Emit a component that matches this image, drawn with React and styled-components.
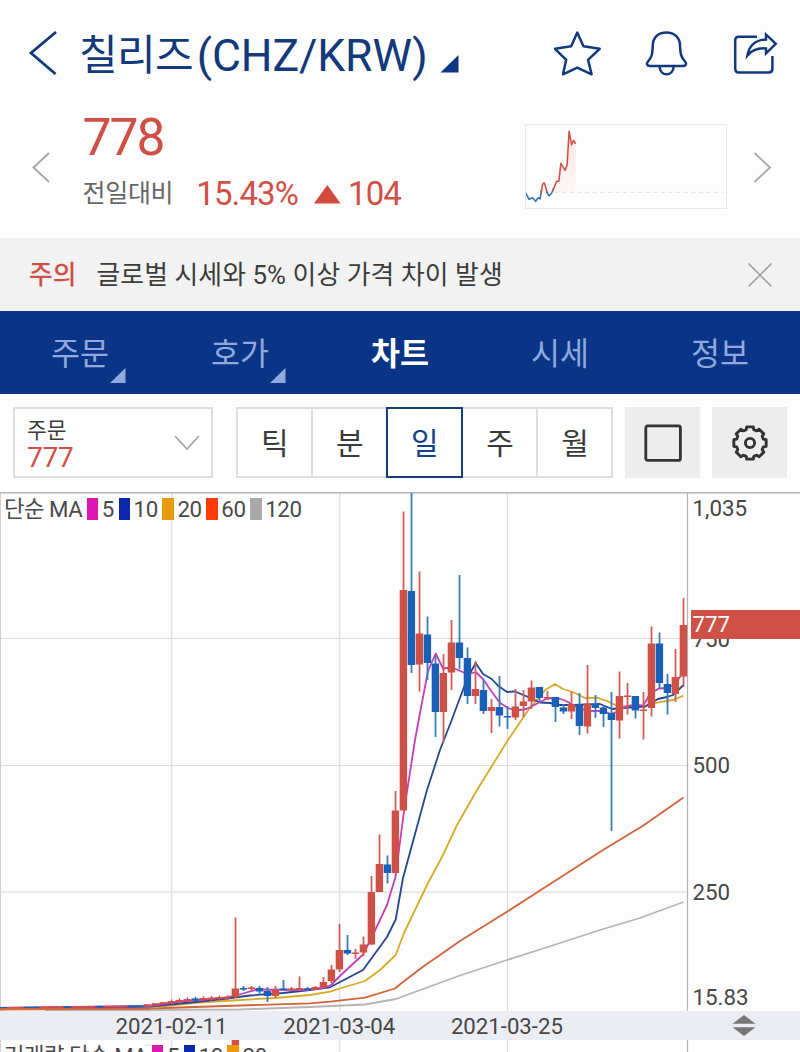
import React from "react";
import styled, { createGlobalStyle } from "styled-components";

const NAVY = "#12397a";
const RED = "#cf5046";
const BLUE = "#1a5fb8";

const GlobalStyle = createGlobalStyle`
  *, *::before, *::after { box-sizing: border-box; }
  html, body { margin: 0; padding: 0; background: #fdfdfd; }
  body { font-family: Roboto, "Noto Sans CJK KR", sans-serif; color: #3c3c3c; overflow: hidden; }
  svg { display: block; flex: none; }
`;

const Screen = styled.div`
  width: 800px;
  height: 1052px;
  overflow: hidden;
  display: flex;
  flex-direction: column;
  background: #fdfdfd;
`;

const Text = styled.span`
  display: block;
  flex: none;
  white-space: nowrap;
  font-size: ${(p) => p.$size}px;
  line-height: ${(p) => p.$line || Math.round(p.$size * 1.2)}px;
  letter-spacing: ${(p) => p.$track || 0}px;
  font-weight: ${(p) => p.$weight || 400};
  color: ${(p) => p.$color || "inherit"};
`;

const Header = styled.header`
  height: 108px;
  flex: none;
  display: flex;
  align-items: center;
  padding: 0 18px 0 26px;
`;

const Title = styled.h1`
  display: flex;
  align-items: center;
  gap: 4px;
  margin: 0 0 0 21px;
  padding-top: 3px;
  width: 360.5px;
  flex: none;
  font-weight: 400;
  color: ${NAVY};
`;

const TitleCorner = styled.svg`
  margin-top: 19px;
`;

const HeaderActions = styled.div`
  display: flex;
  align-items: center;
  gap: 40px;
  margin-left: auto;
`;

const PriceSection = styled.section`
  height: 130px;
  flex: none;
  display: flex;
  align-items: flex-start;
  padding: 0 27px 0 31px;
`;

const ArrowSlot = styled.div`
  padding-top: 42px;
  flex: none;
`;

const PriceInfo = styled.div`
  margin-left: 32.5px;
  padding-top: 1px;
  width: 442.5px;
  flex: none;
`;

const ChangeRow = styled.div`
  display: flex;
  align-items: center;
  height: 36px;
  margin-top: 9px;
`;

const Percent = styled(Text)`
  margin-left: 23px;
`;

const UpTriangle = styled.svg`
  margin: 0 7px 0 16px;
`;

const Spark = styled.div`
  margin: 16px 26px 0 0;
  width: 202px;
  height: 85px;
  flex: none;
  border: 1.5px solid #e9e9e9;
`;

const Notice = styled.div`
  height: 73px;
  flex: none;
  display: flex;
  align-items: center;
  gap: 20px;
  padding: 0 27px 0 29px;
  background: #f2f2f2;
  svg { margin-left: auto; }
`;

const Tabs = styled.nav`
  height: 83px;
  flex: none;
  display: grid;
  grid-template-columns: repeat(5, 160px);
  background: #0a3586;
`;

const Tab = styled.div`
  position: relative;
  display: flex;
  justify-content: center;
  padding-top: 24px;
  color: ${(p) => (p.$active ? "#ffffff" : "#8fa9de")};
`;

const Corner = styled.svg`
  position: absolute;
  left: 110px;
  top: 57px;
`;

const Toolbar = styled.div`
  height: 98px;
  flex: none;
  display: flex;
  align-items: flex-start;
  padding: 13px 13px 0;
`;

const OrderSelect = styled.div`
  width: 200px;
  height: 71px;
  border: 2px solid #dedede;
  background: #fff;
  display: flex;
  align-items: center;
  justify-content: space-between;
  padding: 0 10px 0 12px;
`;

const OrderLabels = styled.div`
  display: flex;
  flex-direction: column;
  padding-top: 3px;
`;

const Periods = styled.div`
  display: flex;
  margin-left: 23px;
`;

const Period = styled.div`
  width: 77px;
  height: 71px;
  margin-right: -1.9px;
  padding: 3px 0 0 1px;
  display: flex;
  align-items: center;
  justify-content: center;
  position: relative;
  z-index: ${(p) => (p.$active ? 1 : 0)};
  border: 2px solid ${(p) => (p.$active ? "#153f78" : "#dedede")};
  background: #fff;
  color: ${(p) => (p.$active ? "#153f86" : "#3a3a3a")};
`;

const ToolButton = styled.div`
  width: 75px;
  height: 71px;
  margin-left: ${(p) => p.$gap}px;
  display: flex;
  align-items: center;
  justify-content: center;
  background: #ededed;
`;

const ChartPane = styled.section`
  position: relative;
  height: 519px;
  flex: none;
`;

const Legend = styled.div`
  position: absolute;
  left: ${(p) => p.$left}px;
  top: ${(p) => p.$top}px;
  display: flex;
  align-items: center;
  color: #4a4a4a;
`;

const Swatch = styled.i`
  width: 11.5px;
  height: 22px;
  flex: none;
  margin: 0 3.6px 0 4.5px;
  background: ${(p) => p.$color};
`;

const DateBar = styled.div`
  height: 29px;
  flex: none;
  display: flex;
  align-items: center;
  padding: 0 44px 0 115.5px;
  background: #ecedf3;
  color: #464646;
  svg { margin-left: auto; }
`;

const DateLabel = styled(Text)`
  width: 167.7px;
`;

const VolumePane = styled.section`
  position: relative;
  height: 12px;
  flex: none;
  overflow: hidden;
`;

/* [x, high, low, body top, body bottom, rising] in pane pixels */
const CANDLES = [
  [235.5, 917.5, 998, 988.5, 997, 1], [243.5, 986, 991, 988, 989.5, 0],
  [251.5, 986, 990.5, 987.5, 989, 1], [259.5, 986, 995, 988, 991.5, 0],
  [267.5, 987, 1002, 991, 996, 0], [275.5, 986, 998, 990, 996, 1],
  [283.5, 980, 991, 988.5, 990, 0], [291.5, 987, 991, 988.5, 990, 1],
  [299.5, 976.5, 991, 988, 989.5, 1], [307.5, 987, 991, 988.5, 990, 0],
  [315.5, 986, 990, 987, 989.5, 1], [323.5, 977, 988, 982, 987, 1],
  [331.5, 965, 983, 969.5, 981, 1], [339.5, 924, 972, 950, 969.5, 1],
  [347.5, 935, 955, 950, 953.5, 0], [355.5, 949, 959, 952.5, 954, 1],
  [363.5, 936.5, 956, 944.5, 952.5, 1], [371.5, 876, 945, 892, 944.5, 1],
  [379.5, 834.5, 892, 864, 892, 1], [387.5, 855.5, 883.5, 864.5, 873, 0],
  [395.5, 791, 873, 810.5, 873, 1], [403.5, 511.5, 810, 590, 810.5, 1],
  [411.5, 493, 673, 591, 665, 0], [419.5, 571.5, 691.5, 633.5, 664.5, 1],
  [427.5, 616.5, 680, 634.5, 663, 0], [435.5, 656, 737, 663.5, 712, 0],
  [443.5, 654, 743, 673, 712, 1], [451.5, 620, 690, 642.5, 672.5, 1],
  [459.5, 575, 669, 642.5, 658, 0], [467.5, 647.5, 704, 658, 696, 0],
  [475.5, 661, 704, 689, 696, 1], [483.5, 679, 714, 690, 711, 0],
  [491.5, 699, 733, 707, 711, 1], [499.5, 676, 726.5, 707, 715.5, 0],
  [507.5, 706, 729, 716, 717.5, 0], [515.5, 689, 720, 706.5, 717.5, 1],
  [523.5, 690, 717, 701.5, 706, 1], [531.5, 680.5, 709, 687.5, 701.5, 1],
  [539.5, 687, 702, 687, 698, 0], [547.5, 691, 700, 697, 698.5, 1],
  [555.5, 697, 722, 697, 707, 0], [563.5, 704, 714, 707.5, 711.5, 0],
  [571.5, 692, 719, 704, 711.5, 1], [579.5, 693, 735, 705, 726, 0],
  [587.5, 665, 733.5, 703.5, 726.5, 1], [595.5, 695, 718, 704, 708, 0],
  [603.5, 705, 727, 707.5, 714, 0], [611.5, 692, 831, 713, 720, 0],
  [619.5, 671.5, 738.5, 696, 720.5, 1], [627.5, 683, 714.5, 695.5, 697, 1],
  [635.5, 696, 718.5, 696, 710.5, 0], [643.5, 692, 739.5, 709.5, 711, 1],
  [651.5, 626.5, 716.5, 643.5, 708, 1], [659.5, 632.5, 689, 643.5, 683, 0],
  [667.5, 674, 714.5, 684, 693, 0], [675.5, 649, 702, 677, 694, 1],
  [683.5, 598, 687, 625, 676.5, 1],
];

const FLAT_DAYS = Array.from({ length: 29 }, (_, i) => {
  const x = 3.5 + i * 8;
  const y = x < 140 ? 1007.8 - x * 0.012 : 1006 - Math.min(x - 140, 50) * 0.13 - Math.max(0, x - 190) * 0.05;
  return { x, y, up: ![0, 3, 4, 8, 12, 16, 17, 24].includes(i) };
});

const AVERAGES = [
  ["#b5b5b5", "45,1010.5 240,1009.5 310,1007 365,1004.5 396,999 423,989 460,975.5 507,960 540,949.5 600,930 640,918 683.5,902"],
  ["#d2643c", "0,1009.5 150,1008.5 240,1005.5 310,1003.3 330,1001.7 365,997.7 395,988.5 402,982.7 423,966.7 440,955 460,941 507,911.7 540,890.5 603,850 643,825.7 683.5,797.5"],
  ["#d6ab28", "0,1008.8 150,1007.5 200,1002.5 240,1000 275,998 310,995 330,991.6 343,987.5 365,981 380,970 395.7,955 404,933 427,885 443,855 457,825 477,790 508,740 528,710.5 545,690 555,684 563,689 573,692 585,698 597,697.7 607,701 617,705.7 630,706.7 645,706 657,702.7 673,700 683.5,695.7"],
  ["#27468f", "0,1008.3 150,1006.5 200,1001.5 227,998.5 250,995.5 283,993 310,990 330,987.3 363,970 387,937 395.7,919.5 403,878 427,790 440,750 451.7,720 467,679 475.7,663 483,674 491.7,679 498,685.7 507,692 515,691.5 528,697 540,702.5 550,703 560,705 573,705 600,704 612,709 630,707.5 645,706.5 658,699 667,697 673,695 683.5,685"],
  ["#c43fb4", "0,1008 150,1006 180,1001.5 227,997.5 243,993.5 257,989.5 300,990 323,988 331,985 341,975 363,954.5 371,939 387,905 395.5,877 404,811 415,740 420,713 428,671 435.7,653.5 443,668.5 451.5,667.5 458,670 468,674.5 475.5,672 483,679 491.5,691.5 500,703 508,708 516.5,710.5 526.5,709 540,702 547,698.5 557,698 565,700.5 575,706 587,711 603,711 611,714 619,711 627,706 635,705 643,705.5 651,693 659,688.5 667,688 675,684 683.5,672"],
];

function PriceChart() {
  return (
    <svg width="800" height="519" viewBox="0 492 800 519">
      <g stroke="#dedede" strokeWidth="1.2">
        <path d="M0 638.5H687M0 765.5H687M0 892.2H687M171.7 493V1011M339.7 493V1011M507.5 493V1011" />
      </g>
      <path d="M.5 493V1011" stroke="#cfcfcf" />
      <path d="M687.5 493V1011" stroke="#b3b3b3" strokeWidth="1.2" />
      <path d="M0 492.7H800" stroke="#b4b4b4" strokeWidth="1.8" />
      <g fill="none" strokeWidth="1.8" strokeLinejoin="round">
        {AVERAGES.map(([color, points]) => (
          <polyline key={color} points={points} stroke={color} />
        ))}
      </g>
      {FLAT_DAYS.map((d) => (
        <g key={d.x} fill={d.up ? RED : BLUE}>
          <rect x={d.x - 4} y={d.y - 0.8} width={d.x < 140 ? 8 : 7} height="1.8" />
          {d.x > 170 && <rect x={d.x - 0.7} y={d.y - 2.5} width="1.4" height="5" />}
        </g>
      ))}
      <path d="M0 1008.8H150" stroke="#d2643c" strokeWidth="1.4" />
      {CANDLES.map(([x, hi, lo, top, bottom, up]) => (
        <g key={x} fill={up ? RED : BLUE}>
          <rect x={x - 0.9} y={hi} width="1.8" height={lo - hi} fill={up ? "#cd6058" : "#3a7cb8"} />
          <rect x={x - 3.8} y={top} width="7.4" height={bottom - top} />
        </g>
      ))}
      <g fontFamily="Roboto, sans-serif" fontSize="22.3" fill="#464646">
        <text x="692.5" y="515.8">1,035</text>
        <text x="692.5" y="646.5">750</text>
        <text x="692.5" y="773.3">500</text>
        <text x="692.5" y="900">250</text>
        <text x="692.5" y="1004.5">15.83</text>
        <rect x="691" y="610" width="109" height="29" fill={RED} />
        <text x="692.5" y="632" fill="#fff">777</text>
      </g>
    </svg>
  );
}

function Sparkline() {
  return (
    <svg width="199" height="82" viewBox="526.4 125.2 199 82">
      <defs>
        <linearGradient id="rise" x1="0" y1="0" x2="0" y2="1">
          <stop offset="0" stopColor="#f3c9c6" stopOpacity=".55" />
          <stop offset="1" stopColor="#fbe9e8" stopOpacity=".3" />
        </linearGradient>
      </defs>
      <path d="M553 192L557 182L559 181L561 164L565 170L567 167L569.5 132L572 145L576 143V192Z" fill="url(#rise)" />
      <path d="M555 192.5H724" stroke="#dddddd" strokeDasharray="4 3.6" />
      <g fill="none" strokeWidth="1.6" strokeLinejoin="round">
        <path d="M526 193L529.5 199.5L533 198L536 201.5L538.5 198L540.5 199L542 190" stroke="#3178ae" />
        <path d="M541.5 193L543 184.5L544.5 183L546 187L547.5 193" stroke={RED} />
        <path d="M547 191.5L549.5 196L552 193.5L554 188.5" stroke="#3178ae" />
        <path d="M553 191.5L557 181.5H559.2L561.3 163.5L565.5 170.5L567.5 165L569.5 131.5L572 145L574 140.5L576 144" stroke={RED} />
      </g>
    </svg>
  );
}

const gearPath = (() => {
  const pts = [];
  for (let i = 0; i < 8; i += 1) {
    const base = (i * 45 - 90) * (Math.PI / 180);
    [[-16, 13.9], [-11.5, 16.5], [11.5, 16.5], [16, 13.9]].forEach(([deg, r]) => {
      const a = base + (deg * Math.PI) / 180;
      pts.push(`${(19 + r * Math.cos(a)).toFixed(2)} ${(19 + r * Math.sin(a)).toFixed(2)}`);
    });
  }
  return `M${pts.join("L")}Z`;
})();

const TABS = [
  { label: "주문", corner: true },
  { label: "호가", corner: true },
  { label: "차트", active: true },
  { label: "시세" },
  { label: "정보" },
];

const PRICE_MA = [["#dc17b4", "5"], ["#0b28ad", "10"], ["#e69a0c", "20"], ["#fb3a05", "60"], ["#a8a8a8", "120"]];
const VOLUME_MA = [["#dc17b4", "5"], ["#0b28ad", "10"], ["#ef9a0c", "20"]];

function MaLegend({ title, items, left, top }) {
  return (
    <Legend $left={left} $top={top}>
      <Text $size={22.3} $line={24} $track={-0.5}>{title}</Text>
      {items.map(([color, label]) => (
        <React.Fragment key={label}>
          <Swatch $color={color} />
          <Text $size={22.3} $line={24} $track={-0.4}>{label}</Text>
        </React.Fragment>
      ))}
    </Legend>
  );
}

export default function App() {
  return (
    <Screen>
      <GlobalStyle />
      <Header>
        <svg width="32" height="50" viewBox="26 29 32 50" fill="none" stroke={NAVY} strokeWidth="2.8">
          <path d="M56 32L31 53L55.5 74" />
        </svg>
        <Title>
          <Text $size={42} $line={54} $track={-0.7}>칠리즈</Text>
          <Text $size={44.5} $line={54} $track={-0.1}>(CHZ/KRW)</Text>
        </Title>
        <TitleCorner width="19" height="18" viewBox="0 0 19 18">
          <path d="M18.5 0V17.5H.5Z" fill="#0c3585" />
        </TitleCorner>
        <HeaderActions>
          <svg width="50" height="50" viewBox="552 29 50 50" fill="none" stroke={NAVY} strokeWidth="2.5" strokeLinejoin="round">
            <path d="M577.3 32.6L583.4 46.2L599.7 48.8L588 59.8L591.6 74.3L577.3 67.6L563 74.3L566.2 59.8L555 48.8L571.2 46.2Z" />
          </svg>
          <svg width="50" height="50" viewBox="642 29 50 50" fill="none" stroke={NAVY} strokeWidth="2.5" strokeLinejoin="round">
            <path d="M666.3 32.5C657.8 32.5 653 38 652.8 45C652.5 55 651.5 57.5 648 61.5C646 63.7 647 66 650 66H683C686 66 687 63.7 685 61.5C681.5 57.5 680.3 55 680 45C679.8 38 674.8 32.5 666.3 32.5Z" />
            <path d="M659.5 66.5C660 76.8 673.2 76.8 673.7 66.5" />
          </svg>
          <svg width="50" height="50" viewBox="732 29 50 50" fill="none" stroke={NAVY} strokeWidth="2.5" strokeLinejoin="round">
            <path d="M757 36.8H739Q735.2 36.8 735.2 40.5V68.7Q735.2 72.4 739 72.4H768.7Q772.4 72.4 772.4 68.7V56" />
            <path d="M747.4 55.5C749 46.5 755 40 766 39.5V34.5L775.8 43.8L766 53.4V48.4C758 47.8 751.5 50.5 747.4 55.5Z" strokeLinejoin="miter" strokeWidth="2.4" />
          </svg>
        </HeaderActions>
      </Header>

      <PriceSection>
        <ArrowSlot>
          <svg width="19" height="34" viewBox="31 150 19 34" fill="none" stroke="#a6a6a6" strokeWidth="1.8">
            <path d="M49 153L33.5 167.5L49 182" />
          </svg>
        </ArrowSlot>
        <PriceInfo>
          <Text $size={51.5} $line={58} $track={-1.9} $color={RED}>778</Text>
          <ChangeRow>
            <Text $size={25} $line={36} $color="#666" $track={-0.3}>전일대비</Text>
            <Percent $size={33} $line={36} $color={RED} $track={-0.9}>15.43%</Percent>
            <UpTriangle width="27" height="19" viewBox="0 0 27 19">
              <path d="M13.3 0L26.6 18.5H0Z" fill="#d24a3e" />
            </UpTriangle>
            <Text $size={33} $line={36} $color={RED} $track={-0.9}>104</Text>
          </ChangeRow>
        </PriceInfo>
        <Spark><Sparkline /></Spark>
        <ArrowSlot>
          <svg width="19" height="34" viewBox="753 150 19 34" fill="none" stroke="#a6a6a6" strokeWidth="1.8">
            <path d="M754.5 153L770 167.5L754.5 182" />
          </svg>
        </ArrowSlot>
      </PriceSection>

      <Notice>
        <Text $size={25.8} $line={36} $weight={500} $color={RED}>주의</Text>
        <Text $size={25.8} $line={36} $track={0.1}>글로벌 시세와 5% 이상 가격 차이 발생</Text>
        <svg width="26" height="26" viewBox="0 0 26 26" stroke="#9c9c9c" strokeWidth="1.5">
          <path d="M1.5 1.5L24.5 24.5M24.5 1.5L1.5 24.5" />
        </svg>
      </Notice>

      <Tabs>
        {TABS.map((t) => (
          <Tab key={t.label} $active={t.active}>
            <Text $size={31.5} $line={40} $weight={t.active ? 700 : 400}>{t.label}</Text>
            {t.corner && (
              <Corner width="16" height="15" viewBox="0 0 16 15">
                <path d="M15.5 0V15H0Z" fill="#8fa9de" />
              </Corner>
            )}
          </Tab>
        ))}
      </Tabs>

      <Toolbar>
        <OrderSelect>
          <OrderLabels>
            <Text $size={21.5} $line={27}>주문</Text>
            <Text $size={28} $line={28} $color={RED} $track={-0.2}>777</Text>
          </OrderLabels>
          <svg width="28" height="18" viewBox="0 0 28 18" fill="none" stroke="#a0a0a0" strokeWidth="1.6">
            <path d="M2 2L14 15L26 2" />
          </svg>
        </OrderSelect>
        <Periods>
          {["틱", "분", "일", "주", "월"].map((p) => (
            <Period key={p} $active={p === "일"}>
              <Text $size={30} $line={40}>{p}</Text>
            </Period>
          ))}
        </Periods>
        <ToolButton $gap={14}>
          <svg width="38" height="38" viewBox="0 0 38 38" fill="none" stroke="#333" strokeWidth="2.8">
            <rect x="1.8" y="1.8" width="34.6" height="34.6" rx="2" />
          </svg>
        </ToolButton>
        <ToolButton $gap={12}>
          <svg width="38" height="38" viewBox="0 0 38 38" fill="none" stroke="#333" strokeWidth="2.9" strokeLinejoin="round">
            <path d={gearPath} />
            <circle cx="19" cy="19" r="4.6" />
          </svg>
        </ToolButton>
      </Toolbar>

      <ChartPane>
        <PriceChart />
        <MaLegend title="단순 MA" items={PRICE_MA} left={4} top={5} />
      </ChartPane>

      <DateBar>
        <DateLabel $size={22.2} $line={28}>2021-02-11</DateLabel>
        <DateLabel $size={22.2} $line={28}>2021-03-04</DateLabel>
        <DateLabel $size={22.2} $line={28}>2021-03-25</DateLabel>
        <svg width="24" height="21" viewBox="0 0 24 21" fill="#777">
          <path d="M12 0L23.5 8.8H.5ZM12 21L23.5 12.2H.5Z" />
        </svg>
      </DateBar>

      <VolumePane>
        <svg width="800" height="12" viewBox="0 0 800 12">
          <path d="M171.7 0V12M339.7 0V12M507.5 0V12" stroke="#dedede" strokeWidth="1.2" />
          <path d="M.5 0V12" stroke="#cfcfcf" />
          <path d="M687.5 0V12" stroke="#b3b3b3" strokeWidth="1.2" />
          <rect x="231.7" y="0" width="7.4" height="12" fill={RED} />
        </svg>
        <MaLegend title="거래량 단순 MA" items={VOLUME_MA} left={4} top={4} />
      </VolumePane>
    </Screen>
  );
}
